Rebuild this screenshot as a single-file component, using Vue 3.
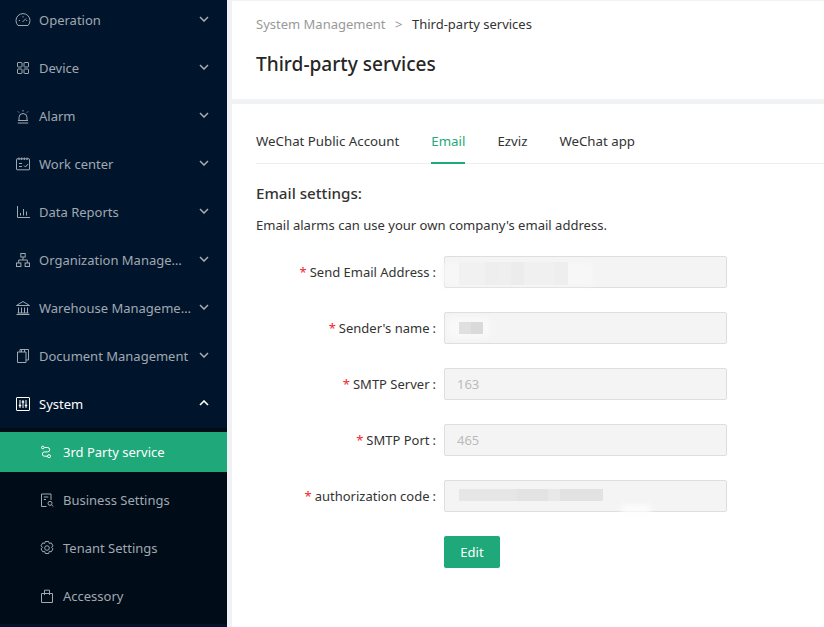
<template>
  <div class="layout">
    <aside class="sider">
      <ul class="menu">
        <li v-for="item in menu" :key="item.label" class="menu-item" :class="{ open: item.open }">
          <svg class="ico" viewBox="0 0 16 16" fill="none" stroke="currentColor" stroke-width="1" v-html="item.icon"></svg>
          <span class="menu-label">{{ item.label }}</span>
          <svg class="arrow" viewBox="0 0 10 6" fill="none" stroke="currentColor" stroke-width="1.6">
            <path :d="item.open ? 'M1 5l4-4 4 4' : 'M1 1l4 4 4-4'" />
          </svg>
        </li>
        <li class="submenu">
          <div v-for="sub in subMenu" :key="sub.label" class="sub-item" :class="{ active: sub.active }">
            <svg class="ico" viewBox="0 0 16 16" fill="none" stroke="currentColor" stroke-width="1" v-html="sub.icon"></svg>
            <span>{{ sub.label }}</span>
          </div>
        </li>
      </ul>
    </aside>

    <main class="main">
      <header class="page-head">
        <div class="crumbs">
          <span class="crumb-parent">System Management</span>
          <span class="crumb-sep">&gt;</span>
          <span>Third-party services</span>
        </div>
        <h1>Third-party services</h1>
      </header>

      <section class="panel">
        <nav class="tabs">
          <span v-for="tab in tabs" :key="tab" class="tab" :class="{ active: tab === 'Email' }">{{ tab }}</span>
        </nav>

        <h2>Email settings:</h2>
        <p class="hint">Email alarms can use your own company's email address.</p>

        <form class="form" @submit.prevent>
          <div v-for="row in fields" :key="row.label" class="row">
            <label><i>*</i>{{ row.label }}</label>
            <div class="field">
              <span v-if="row.value" class="value">{{ row.value }}</span>
              <span v-if="row.haze" class="haze" :class="row.haze"></span>
              <span v-if="row.mosaic" class="mosaic" :class="row.mosaic"></span>
            </div>
          </div>
          <div class="row actions">
            <button type="button">Edit</button>
          </div>
        </form>
      </section>
    </main>
  </div>
</template>

<script setup>
const menu = [
  {
    label: 'Operation',
    icon: '<path d="M3 13.500A7 7 0 1 1 13 13.500Z"/><path d="M7.500 10l3.500-3.500M3.800 8.500h1.200M8 4.200v1.200M11.200 8.500h1"/>'
  },
  {
    label: 'Device',
    icon: '<rect x="2.500" y="2.500" width="4.500" height="4.500" rx=".5"/><rect x="9" y="2.500" width="4.500" height="4.500" rx=".5"/><rect x="2.500" y="9" width="4.500" height="4.500" rx=".5"/><rect x="9" y="9" width="4.500" height="4.500" rx=".5"/>'
  },
  {
    label: 'Alarm',
    icon: '<path d="M4 12.500V9.500a4 4 0 0 1 8 0v3M2.800 15h10.400M3 12.500h10M8 2v1.500M3 3.500l1 1M13 3.500l-1 1"/>'
  },
  {
    label: 'Work center',
    icon: '<rect x="1.500" y="2.800" width="13" height="11" rx=".5"/><path d="M4 1.500v2.500M6.700 1.500v2.500M9.300 1.500v2.500M12 1.500v2.500M4 7.500h3M4 10.500h3M9 9.500l1.500 1.500 2.500-3"/>'
  },
  {
    label: 'Data Reports',
    icon: '<path d="M2.500 2V13.500H15M5.500 11.500V9M8.500 11.500V5M11.500 11.500V7.500"/>'
  },
  {
    label: 'Organization Management',
    icon: '<rect x="5.800" y="1.500" width="4.400" height="3.500"/><rect x="1.500" y="11" width="4.400" height="3.500"/><rect x="10.100" y="11" width="4.400" height="3.500"/><path d="M8 5v3M3.700 11V8h8.600v3"/>'
  },
  {
    label: 'Warehouse Management',
    icon: '<path d="M1.500 5.500 8 1.500l6.500 4zM1.500 14.500h13M3.500 7.500v5.500M6.500 7.500v5.500M9.500 7.500v5.500M12.500 7.500v5.500M2.500 13h11"/>'
  },
  {
    label: 'Document Management',
    icon: '<path d="M5 4V1.500h8.500V12H11"/><path d="M2.500 4H11v10.500H2.500z"/><path d="M6.500 4V1.500M9.500 4V1.500"/>'
  },
  {
    label: 'System',
    open: true,
    icon: '<rect x="1.500" y="1.500" width="13" height="13" rx=".5"/><path d="M5 4v8M8 4v8M11 4v8"/><path d="M3.800 9.500h2.400M6.800 6h2.400M9.800 9.500h2.400" stroke-width="1.400"/>'
  }
]

const subMenu = [
  {
    label: '3rd Party service',
    active: true,
    icon: '<circle cx="3.800" cy="3.500" r="1.300"/><circle cx="10" cy="12.200" r="1.500"/><path d="M5.500 3.500h3a2.200 2.200 0 0 1 0 4.400H5.500a2.100 2.100 0 0 0 0 4.300h3"/>'
  },
  {
    label: 'Business Settings',
    icon: '<path d="M7.500 14.500H2.500V2h9.500v6"/><path d="M4.800 5h4.500M4.800 7.500h2.200"/><circle cx="11" cy="11.300" r="2"/><path d="M12.500 12.800l1.800 1.700"/>'
  },
  {
    label: 'Tenant Settings',
    icon: '<path d="M6.300 1.500h3.400l.6 2 2-.6 1.700 3-1.500 1.500 1.500 1.400-1.700 3-2-.5-.6 2.200H6.300l-.6-2.200-2 .5L2 8.800l1.500-1.400L2 5.900l1.700-3 2 .6z"/><circle cx="8" cy="8" r="2.300"/>'
  },
  {
    label: 'Accessory',
    icon: '<path d="M2.500 5.500h11v9h-11zM5.500 7V2.200h5V7"/>'
  }
]

const tabs = ['WeChat Public Account', 'Email', 'Ezviz', 'WeChat app']

// the values are censored in the screenshot, so they are only smudges here
const fields = [
  { label: 'Send Email Address', haze: 'h-address', mosaic: 'm-address' },
  { label: "Sender's name", haze: 'h-name', mosaic: 'm-name' },
  { label: 'SMTP Server', value: '163' },
  { label: 'SMTP Port', value: '465' },
  { label: 'authorization code', haze: 'h-code', mosaic: 'm-code' }
]
</script>

<style scoped>
.layout {
  display: flex;
  width: 824px;
  height: 627px;
  overflow: hidden;
  background: #f0f2f5;
  font-family: "Noto Sans", "Open Sans", sans-serif;
  font-size: 13px;
  color: #333;
}

.sider {
  flex: 0 0 227px;
  height: 627px;
  overflow: hidden;
  background: #00152b;
  color: #a0a8b2;
}
.menu {
  list-style: none;
  margin: -4px 0 0;
  padding: 0;
}
.menu-item {
  display: flex;
  align-items: center;
  height: 48px;
  padding: 0 18px 0 15px;
}
.menu-item.open {
  color: #fff;
}
.ico {
  flex: 0 0 16px;
  width: 16px;
  height: 16px;
  margin-right: 8px;
}
.menu-label {
  flex: 1;
  min-width: 0;
  white-space: nowrap;
  overflow: hidden;
  text-overflow: ellipsis;
}
.arrow {
  flex: 0 0 10px;
  width: 10px;
  height: 6px;
  margin-left: 6px;
  position: relative;
  top: -1px;
}
.submenu {
  background: #000c17;
  padding: 4px 0 0;
  height: 192px;
}
.sub-item {
  display: flex;
  align-items: center;
  height: 40px;
  margin-bottom: 8px;
  padding-left: 39px;
}
.sub-item.active {
  background: #1fa97a;
  color: #fff;
}

.main {
  flex: 1;
  min-width: 0;
  margin-left: 5px;
  padding-top: 1px;
}
.page-head {
  height: 98px;
  background: #fff;
  padding: 13px 24px 0;
  box-sizing: border-box;
  margin-bottom: 5px;
}
.crumbs {
  display: flex;
  gap: 9.5px;
  line-height: 20px;
  height: 20px;
  color: #333;
}
.crumb-parent,
.crumb-sep {
  color: #999;
}
h1 {
  margin: 17px 0 0;
  font-size: 19.1px;
  font-weight: 500;
  line-height: 26px;
  color: #262626;
}

.panel {
  height: 523px;
  background: #fff;
  padding: 0 0 0 24px;
}
.tabs {
  display: flex;
  gap: 32px;
  height: 60px;
  box-sizing: border-box;
  border-bottom: 1px solid #eceef0;
  padding-top: 24px;
  font-size: 13.27px;
}
.tab {
  height: 36px;
  box-sizing: border-box;
  line-height: 26px;
}
.tab.active {
  color: #1fa97a;
  border-bottom: 2px solid #1fa97a;
}
h2 {
  margin: 18px 0 0;
  font-size: 15.2px;
  font-weight: 500;
  line-height: 22px;
  color: #333;
}
.hint {
  margin: 10px 0 0;
  line-height: 22px;
  font-size: 13.05px;
}

.form {
  margin-top: 20px;
  display: flex;
  flex-direction: column;
  gap: 24px;
}
.row {
  display: flex;
  align-items: center;
  height: 32px;
}
.row label {
  width: 180px;
  margin-right: 8px;
  text-align: right;
  white-space: nowrap;
}
.row label::after {
  content: ":";
  margin-left: 3px;
}
.row label i {
  font-style: normal;
  color: #f5222d;
  margin-right: 3px;
}
.field {
  position: relative;
  width: 283px;
  height: 32px;
  box-sizing: border-box;
  padding-left: 12px;
  background: #f4f4f4;
  border: 1px solid #dedede;
  border-radius: 2px;
  line-height: 30px;
  color: #bbb;
}
/* white haze left by the censoring, it runs over the field border */
.haze {
  position: absolute;
  background: #fafafa;
  filter: blur(3px);
}
.h-address { left: -2px; top: 6px; width: 150px; height: 22px; background: #f7f7f7; }
.h-name { left: 3px; top: 5px; width: 42px; height: 20px; background: #f9f9f9; }
.h-code { left: 176px; top: 24px; width: 30px; height: 8px; background: #fdfdfd; }
.mosaic {
  position: absolute;
  left: 14px;
}
.m-address {
  top: 5px;
  width: 109px;
  height: 23px;
  background: linear-gradient(90deg, #f1f1f1 0 24%, #eeeeee 24% 36%, #efefef 36% 48%, #ececec 48% 60%, #f0f0f0 60% 88%, #eeeeee 88%);
}
.m-name {
  top: 9px;
  width: 24px;
  height: 12px;
  background: linear-gradient(90deg, #e0e0e0 0 50%, #dadada 50%);
}
.m-code {
  top: 8px;
  width: 144px;
  height: 12px;
  background: linear-gradient(90deg, #e6e6e6 0 40%, #e3e3e3 40% 62%, #e8e8e8 62% 70%, #e2e2e2 70%);
}
.actions {
  padding-left: 188px;
}
button {
  width: 56px;
  height: 32px;
  border: 0;
  border-radius: 2px;
  background: #1fa97a;
  color: #fff;
  font: inherit;
  padding: 0;
}
</style>
